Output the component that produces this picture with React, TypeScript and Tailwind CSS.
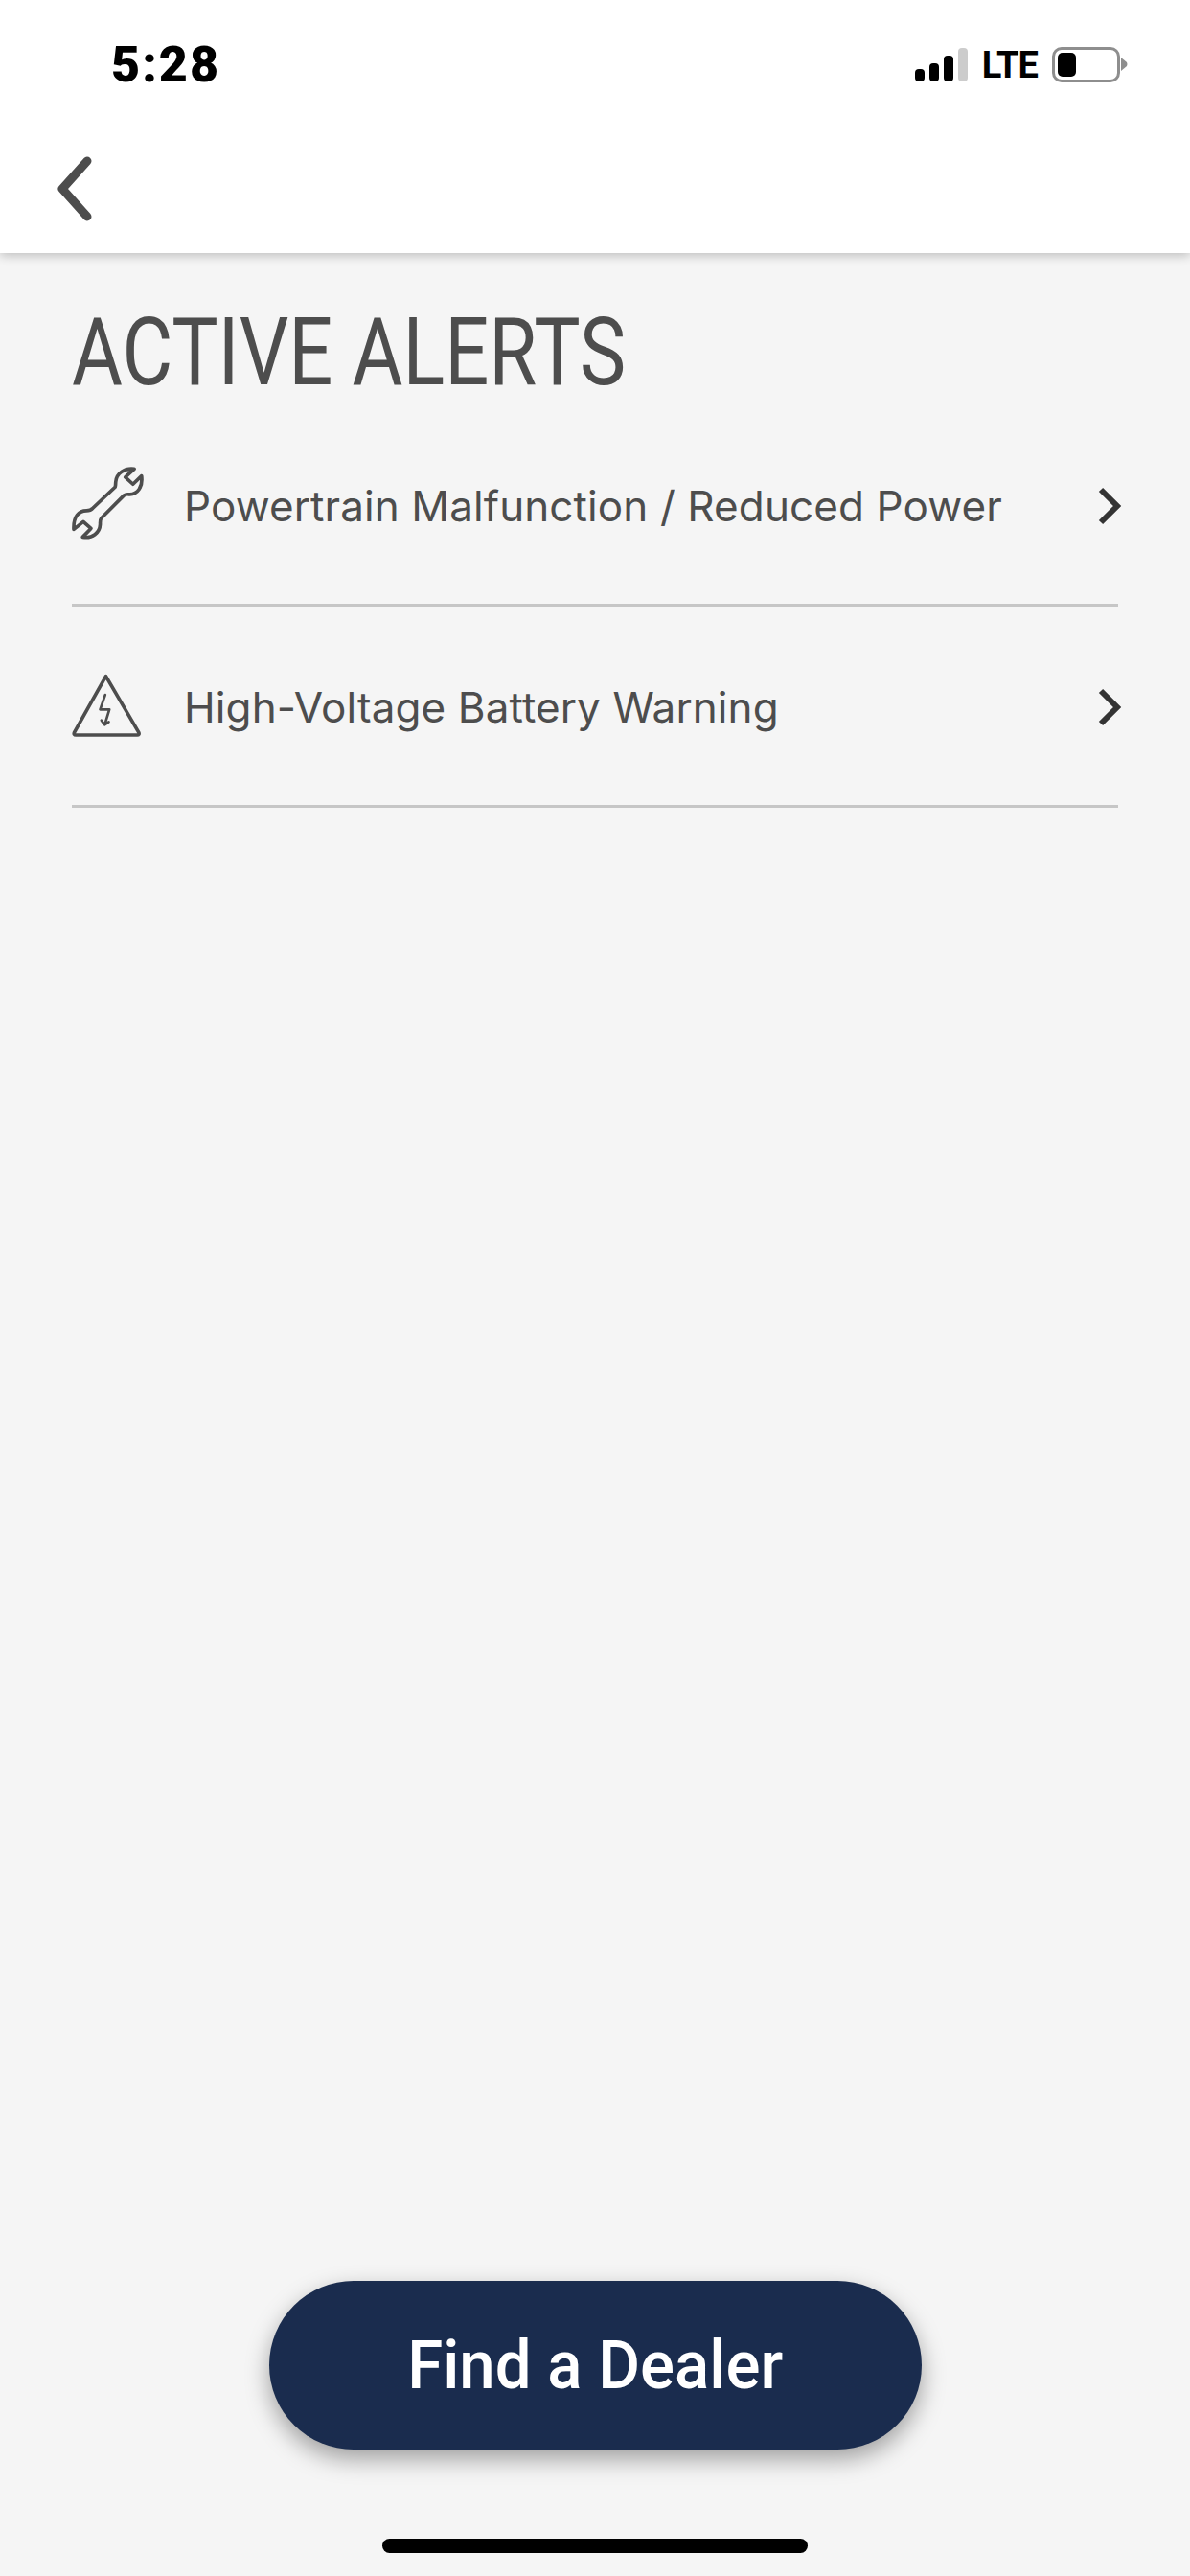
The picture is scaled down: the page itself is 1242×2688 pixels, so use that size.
const rows = [
  { label: 'Powertrain Malfunction / Reduced Power', icon: 'wrench' },
  { label: 'High-Voltage Battery Warning', icon: 'warning' },
];

const WrenchIcon = () => (
  <svg viewBox="72 85 250 250" className="w-[83px] h-[83px]" fill="none" stroke="#4d4d4d" strokeWidth="11" strokeLinejoin="round" strokeLinecap="round">
    <path d="M268 98 C238 94 212 112 210 138 C209 146 210 150 208 155 L137 222 C132 228 126 229 118 229 C95 229 76 246 78 288 L108 264 L132 285 L106 312 C136 318 160 298 161 272 C161 264 160 258 165 252 L236 181 C242 176 248 178 254 178 C278 177 296 155 291 120 L264 146 L240 124 Z" />
  </svg>
);

const WarningIcon = () => (
  <svg viewBox="76 735 230 210" className="w-[77px] h-[70px]" fill="none" stroke="#4d4d4d" strokeWidth="11" strokeLinejoin="round" strokeLinecap="round">
    <path d="M182 746 L285 922 Q288 930 280 930 L88 930 Q80 930 83 922 Z" />
    <path d="M180 804 L164 850 L193 850 L179 896 M168 884 L178 898 L191 889" strokeWidth="8" />
  </svg>
);

const StatusBar = () => (
  <div className="flex items-center justify-between h-[134px] pl-[116px] pr-[64px]">
    <span className="pt-[2px] font-['Roboto',sans-serif] font-black text-[52px] tracking-[2px] leading-none text-black">5:28</span>
    <div className="flex items-center">
      <div className="flex items-end gap-[5px] h-[35px]">
        <div className="w-[10px] h-[13px] rounded-[4px] bg-black" />
        <div className="w-[10px] h-[19px] rounded-[4px] bg-black" />
        <div className="w-[10px] h-[27px] rounded-[4px] bg-black" />
        <div className="w-[10px] h-[35px] rounded-[4px] bg-[#cccccc]" />
      </div>
      <span className="ml-[15px] pt-[2px] font-['Roboto',sans-serif] font-bold text-[38px] tracking-[-1px] leading-none text-black">LTE</span>
      <div className="ml-[15px] flex items-center">
        <div className="w-[71px] h-[37px] rounded-[10px] border-[3px] border-[#8e8e8e] p-[3px]">
          <div className="w-[19px] h-full rounded-[5px] bg-black" />
        </div>
        <svg width="8" height="14" viewBox="0 0 8 14" className="ml-[1px]"><path d="M0 0 L6 5 Q7 7 6 9 L0 14 Z" fill="#8e8e8e" /></svg>
      </div>
    </div>
  </div>
);

const App = () => {
  return (
    <div className="w-[1242px] h-[2688px] flex flex-col bg-[#f5f5f5] overflow-hidden">
      {/* Header */}
      <header className="relative z-10 h-[264px] shrink-0 bg-white shadow-[0_3px_10px_rgba(0,0,0,0.22)]">
        <StatusBar />
        <div className="pl-[57px] pt-[28px]">
          <svg width="44" height="70" viewBox="0 0 44 70" fill="none" stroke="#4d4d4d" strokeWidth="9" strokeLinecap="round" strokeLinejoin="round">
            <path d="M34 6 L8 35 L34 64" />
          </svg>
        </div>
      </header>

      <main className="flex-1 flex flex-col px-[75px]">
        <h1 className="h-[159px] pt-[55px] origin-left scale-x-[0.828] font-['Roboto',sans-serif] font-normal text-[98px] leading-none text-[#4d4d4d] whitespace-nowrap">
          ACTIVE ALERTS
        </h1>

        {rows.map((row) => (
          <div key={row.label} className="h-[210px] flex items-center border-b-[3px] border-[#c6c6c6]">
            <div className="w-[117px] shrink-0 flex items-center">
              {row.icon === 'wrench' ? <WrenchIcon /> : <WarningIcon />}
            </div>
            <span className="flex-1 pt-[2px] font-['Inter',sans-serif] text-[44px] tracking-[0.1px] leading-none text-[#4d4d4d]">{row.label}</span>
            <svg width="26" height="42" viewBox="0 0 26 42" fill="none" stroke="#333333" strokeWidth="6" strokeLinejoin="miter" className="-mr-[4px] translate-y-[1px]">
              <path d="M4 4 L21 21 L4 38" />
            </svg>
          </div>
        ))}

        {/* Bottom action */}
        <div className="mt-auto flex justify-center">
          <button className="w-[681px] h-[176px] rounded-full bg-[#1a2c4e] shadow-[0_10px_24px_rgba(0,0,0,0.35)] text-white">
            <span className="inline-block scale-x-[0.96] font-['Roboto',sans-serif] font-medium text-[70px] leading-none">Find a Dealer</span>
          </button>
        </div>
        <div className="mt-[93px] mb-[24px] mx-auto w-[444px] h-[15px] rounded-full bg-black" />
      </main>
    </div>
  );
};

export default App;
